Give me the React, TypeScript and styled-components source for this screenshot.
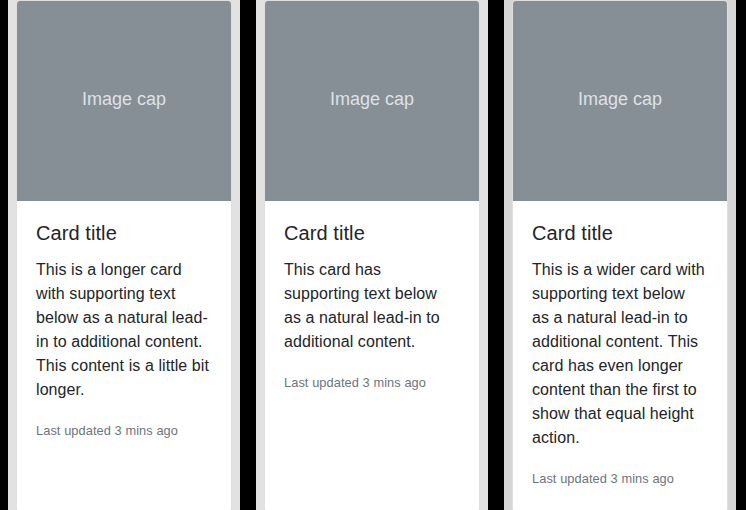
import React from 'react'
import styled, { createGlobalStyle } from 'styled-components'

const GlobalStyle = createGlobalStyle`
  html, body {
    margin: 0;
    padding: 0;
    background: #000;
  }
  body {
    font-family: 'Liberation Sans', Arial, sans-serif;
    color: #212529;
  }
`

type CardData = {
  text: string
}

const cards: CardData[] = [
  {
    text: 'This is a longer card with supporting text below as a natural lead-in to additional content. This content is a little bit longer.'
  },
  {
    text: 'This card has supporting text below as a natural lead-in to additional content.'
  },
  {
    text: 'This is a wider card with supporting text below as a natural lead-in to additional content. This card has even longer content than the first to show that equal height action.'
  }
]

const Deck = styled.div`
  display: grid;
  grid-template-columns: repeat(3, 232px);
  column-gap: 16px;
  padding: 0 10px 0 8px;
  height: 510px;
  overflow: hidden;
`

const Column = styled.div<{ $shade?: string }>`
  display: flex;
  background: ${(p) => p.$shade ?? '#e2e2e2'};
  padding: 0 8px;
`

const Card = styled.div`
  display: flex;
  flex-direction: column;
  flex: 1;
  min-width: 0;
  background: #fff;
  border: 1px solid rgba(0, 0, 0, 0.125);
  border-radius: 4px;
`

const ImageCap = styled.div`
  display: flex;
  align-items: center;
  justify-content: center;
  height: 200px;
  box-sizing: border-box;
  padding-bottom: 4px;
  flex-shrink: 0;
  background: #868e96;
  color: #dee2e6;
  font-size: 18px;
  border-radius: 3px 3px 0 0;
`

const CardBody = styled.div`
  padding: 20px 21px 20px 19px;
  letter-spacing: 0.08px;
`

const CardTitle = styled.h5`
  margin: 0 0 13px;
  font-size: 20px;
  font-weight: 400;
  line-height: 1.2;
`

const CardText = styled.p`
  margin: 0 0 16px;
  font-size: 16px;
  line-height: 24px;

  &:last-child {
    margin-bottom: 0;
  }
`

const Muted = styled.small`
  font-size: 80%;
  color: #6c757d;
`

export default function App() {
  return (
    <>
      <GlobalStyle />
      <Deck>
        {cards.map((c, i) => (
          <Column key={i} $shade={i === 2 ? '#d6d6d6' : undefined}>
            <Card>
              <ImageCap>Image cap</ImageCap>
              <CardBody>
                <CardTitle>Card title</CardTitle>
                <CardText>{c.text}</CardText>
                <CardText>
                  <Muted>Last updated 3 mins ago</Muted>
                </CardText>
              </CardBody>
            </Card>
          </Column>
        ))}
      </Deck>
    </>
  )
}
